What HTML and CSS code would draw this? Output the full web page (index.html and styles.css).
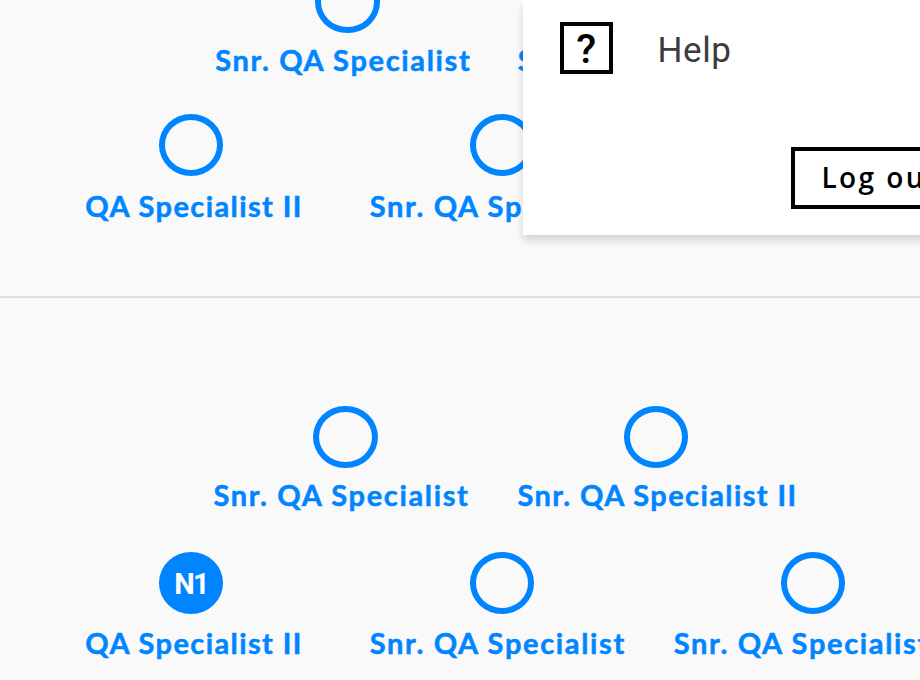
FILE: index.html
```html
<!DOCTYPE html>
<html lang="en">
<head>
<meta charset="utf-8">
<title>Team levels</title>
<link rel="stylesheet" href="styles.css">
</head>
<body>
<main class="board">
  <section class="band band-first">
    <div class="rings rings-upper"><span class="ring"></span></div>
    <div class="labels labels-upper"><span>Snr. QA Specialist</span><span>S</span></div>
    <div class="rings rings-lower"><span class="ring"></span><span class="ring"></span></div>
    <div class="labels labels-lower"><span class="short">QA Specialist II</span><span>Snr. QA Sp</span></div>
  </section>
  <section class="band band-second">
    <div class="rings rings-upper"><span class="ring"></span><span class="ring"></span></div>
    <div class="labels labels-upper"><span>Snr. QA Specialist</span><span class="short">Snr. QA Specialist II</span></div>
    <div class="rings rings-lower"><span class="ring ring-filled">N1</span><span class="ring"></span><span class="ring"></span></div>
    <div class="labels labels-lower"><span class="short">QA Specialist II</span><span>Snr. QA Specialist</span><span>Snr. QA Specialist</span></div>
  </section>
</main>
<aside class="menu">
  <div class="help"><span class="help-icon">?</span><span class="help-text">Help</span></div>
  <button class="logout">Log out</button>
</aside>
</body>
</html>
```

FILE: styles.css
```css
* { box-sizing: border-box; }
body {
  margin: 0;
  width: 920px;
  height: 680px;
  overflow: hidden;
  position: relative;
  background: #f9f9f9;
  font-family: Lato, "Liberation Sans", sans-serif;
}
.board { width: 920px; height: 680px; overflow: hidden; }
.band { overflow: hidden; }
.band-first { height: 298px; border-bottom: 2px solid #dfdfdf; }
.band-second { height: 382px; padding-top: 107.5px; }
.rings { display: flex; gap: 246.4px; height: 62px; }
.rings-upper { padding-left: 313.3px; }
.rings-lower { padding-left: 159px; margin-top: 38.5px; }
.ring {
  flex: none;
  width: 64.4px;
  height: 62px;
  border: 6.5px solid #0085ff;
  border-radius: 50%;
}
.ring-filled {
  background: #0085ff;
  color: #fff;
  font: bold 29px/52px Roboto, sans-serif;
  text-align: center;
  letter-spacing: -1.5px;
}
.labels {
  display: grid;
  height: 34px;
  margin-top: 11.5px;
  color: #0085ff;
  font-size: 29px;
  font-weight: 700;
  line-height: 32px;
  letter-spacing: 1.65px;
  white-space: nowrap;
  -webkit-text-stroke: 0.5px #0085ff;
}
.short { letter-spacing: 1.4px; }
.labels-upper { grid-template-columns: 304px 304px; padding-left: 213.5px; }
.labels-lower { grid-template-columns: 284.5px 304px 304px; padding-left: 85.3px; }
.band-second .labels-lower { margin-top: 13.5px; }
.band-first .rings-upper { margin-top: -29px; padding-left: 315.3px; }
.band-first .labels-upper { margin-top: 10.5px; padding-left: 215.3px; grid-template-columns: 302.5px 304px; }
.band-first .rings-lower { margin-top: 36.5px; }
.band-first .labels-lower { margin-top: 13.5px; }
.menu {
  position: absolute;
  left: 523px;
  top: 0;
  width: 430px;
  height: 235px;
  padding: 22px 0 0 36.5px;
  background: #fff;
  box-shadow: 0 6px 8px rgba(0, 0, 0, 0.14);
}
.help { display: flex; height: 51.5px; }
.help-icon {
  width: 53.5px;
  height: 51.5px;
  border: 4px solid #000;
  font: 500 41px/47px Roboto, sans-serif;
  text-align: center;
}
.help-text {
  margin-left: 44.5px;
  color: #3c3c3c;
  font: 400 35px/57px Roboto, sans-serif;
  letter-spacing: 0.6px;
}
.logout {
  display: block;
  margin: 73px 0 0 231.5px;
  width: 160px;
  height: 62px;
  padding: 0 0 2px 26.5px;
  border: 4px solid #000;
  background: #fff;
  color: #000;
  font: 600 28px/50px "Open Sans", sans-serif;
  letter-spacing: 2.4px;
  text-align: left;
}
```
